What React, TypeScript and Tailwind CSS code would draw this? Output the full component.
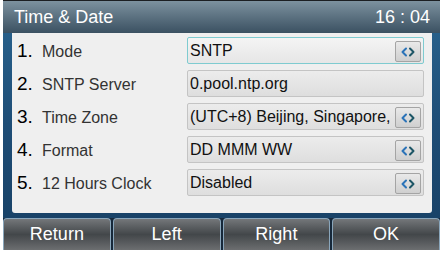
const rows = [
  { n: "1.", label: "Mode", value: "SNTP", arrow: true, active: true },
  { n: "2.", label: "SNTP Server", value: "0.pool.ntp.org", arrow: false, active: false },
  { n: "3.", label: "Time Zone", value: "(UTC+8) Beijing, Singapore,", arrow: true, active: false },
  { n: "4.", label: "Format", value: "DD MMM WW", arrow: true, active: false },
  { n: "5.", label: "12 Hours Clock", value: "Disabled", arrow: true, active: false },
];

const keys = ["Return", "Left", "Right", "OK"];

function SwitchArrows() {
  return (
    <div className="absolute right-[2px] top-[3px] flex h-[21px] w-[26px] items-center justify-center rounded-[2px] border border-[#a4a4a4] bg-gradient-to-b from-[#e9e9e9] to-[#cfcfcf]">
      <svg width="16" height="10" viewBox="0 0 16 10" fill="none">
        <path d="M6 1.5 L2.5 5 L6 8.5" stroke="#2b73b8" strokeWidth="2" strokeLinecap="round" strokeLinejoin="round" />
        <path d="M10 1.5 L13.5 5 L10 8.5" stroke="#1d5666" strokeWidth="2" strokeLinecap="round" strokeLinejoin="round" />
      </svg>
    </div>
  );
}

export default function App() {
  return (
    <div className="h-[253px] w-[442px] bg-white" style={{ fontFamily: '"Liberation Sans", Arial, sans-serif' }}>
      <div className="ml-[3px] flex h-[250px] w-[437px] flex-col overflow-hidden bg-gradient-to-b from-[#2a6590] via-[#1e4d76] to-[#173f63]">
        {/* header */}
        <div className="flex h-[33px] items-center justify-between border-t border-[#1c1f22] bg-gradient-to-b from-[#7d929f] to-[#3b5162] pl-[11px] pr-[10px] text-white">
          <span className="text-[18px] leading-none">Time &amp; Date</span>
          <span className="text-[18px] leading-none">16 : 04</span>
        </div>

        {/* list panel */}
        <div className="ml-[9px] mr-[8px] flex h-[180px] flex-col gap-[6px] rounded-b-[3px] bg-[#efefef] pl-[5px] pr-[8px] pt-[4px]">
          {rows.map((r) => (
            <div key={r.n} className="flex h-[27px] items-center">
              <div className="flex w-[170px] items-baseline">
                <span className="w-[25px] text-[19px] leading-none text-black">{r.n}</span>
                <span className="text-[16px] leading-none text-[#333]">{r.label}</span>
              </div>
              <div
                className={`relative flex h-[27px] flex-1 items-center rounded-[2px] border bg-gradient-to-b pl-[2px] ${
                  r.active ? "border-[#7ecbd0] from-[#f4f4f4] to-[#e6e6e6]" : "border-[#c4c4c4] from-[#ececec] to-[#dedede]"
                }`}
              >
                <span className="whitespace-nowrap text-[16px] leading-none text-[#111]">{r.value}</span>
                {r.arrow && <SwitchArrows />}
              </div>
            </div>
          ))}
        </div>

        {/* softkeys */}
        <div className="mt-[5px] flex h-[32px] gap-[2px] bg-[#16283a]">
          {keys.map((k) => (
            <div
              key={k}
              className="flex flex-1 items-center justify-center rounded-t-[4px] border border-b-0 border-[#8aa6bb] bg-gradient-to-b from-[#74777a] via-[#43474a] to-[#6c6e70] text-[18px] text-white"
            >
              {k}
            </div>
          ))}
        </div>
      </div>
    </div>
  );
}
